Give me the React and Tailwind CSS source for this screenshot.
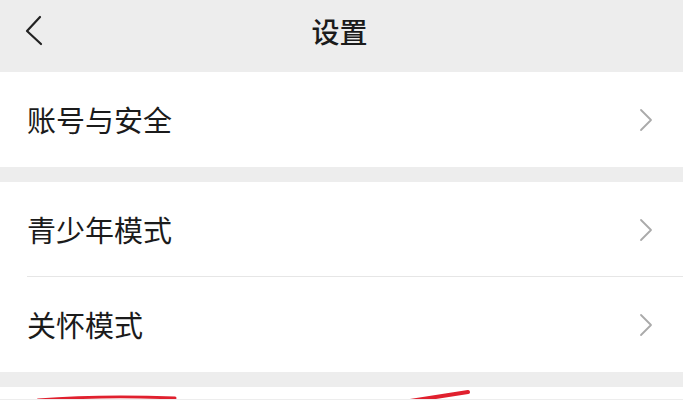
const font = { fontFamily: '"Noto Sans CJK SC", "Noto Sans", sans-serif' }

function Chevron() {
  return (
    <svg width="14" height="24" viewBox="0 0 14 24" fill="none">
      <path d="M2 2 L12 12 L2 22" stroke="#aaaaaa" strokeWidth="1.8" strokeLinecap="round" strokeLinejoin="round" />
    </svg>
  )
}

function Row({ label, divider }) {
  return (
    <div className="relative h-[95px] flex items-center justify-between pl-[27px] pr-[30px] bg-white">
      <span className="text-[29px] leading-none text-[#1b1b1b]">{label}</span>
      <Chevron />
      {divider && <div className="absolute left-[27px] right-0 bottom-0 h-px bg-[#e6e6e6]" />}
    </div>
  )
}

export default function App() {
  return (
    <div className="w-[683px] h-[400px] overflow-hidden bg-[#ededed]" style={font}>
      {/* Header */}
      <div className="h-[72px] flex items-center relative">
        <svg className="absolute left-0 top-0" width="60" height="60" viewBox="0 0 60 60" fill="none">
          <path d="M40 17 L27 31 L41 44" stroke="#222" strokeWidth="2.2" strokeLinecap="round" strokeLinejoin="round" />
        </svg>
        <div className="flex-1 text-center text-[28px] font-medium leading-none text-[#1b1b1b] pb-[10px] pr-[4px]">设置</div>
      </div>

      <Row label="账号与安全" />

      <div className="h-[15px]" />

      <Row label="青少年模式" divider />
      <Row label="关怀模式" />

      <div className="h-[15px]" />

      <div className="h-[12px] bg-white">
        <svg width="683" height="12" viewBox="0 0 683 12" fill="none">
          <path d="M38 13 Q100 8 175 11" stroke="#e0202e" strokeWidth="3" strokeLinecap="round" />
          <path d="M410 14 L468 5" stroke="#e0202e" strokeWidth="4" strokeLinecap="round" />
        </svg>
      </div>
    </div>
  )
}
